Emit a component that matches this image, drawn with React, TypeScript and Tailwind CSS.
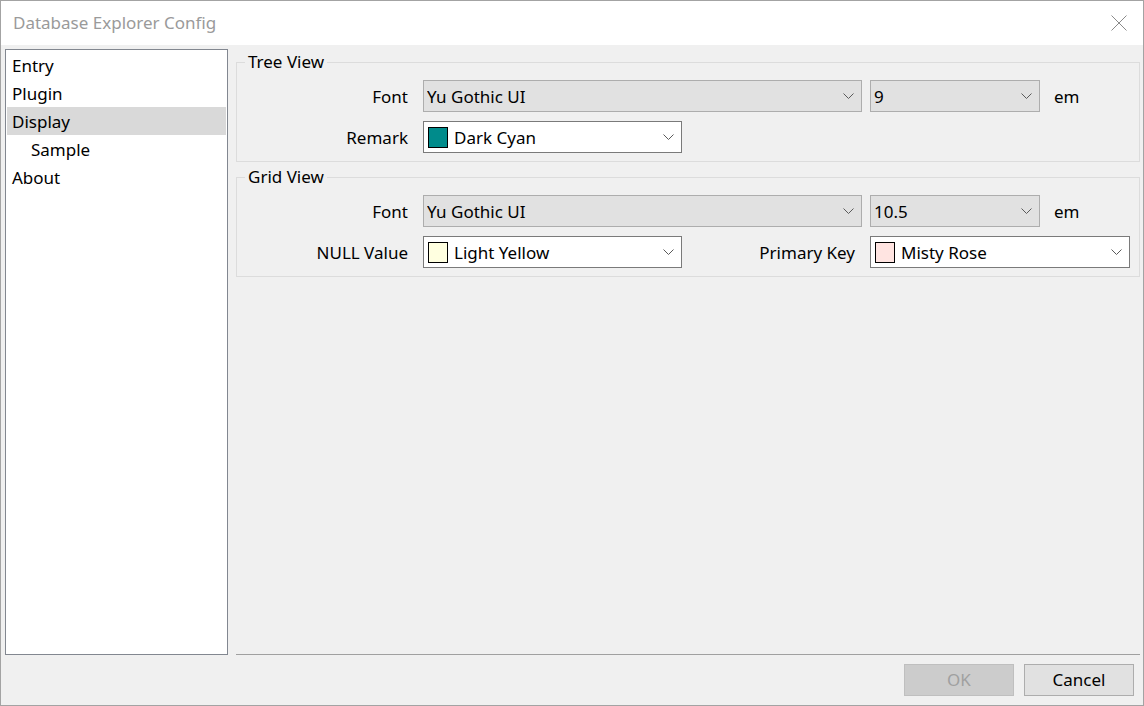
import React from "react";

const Chevron = () => (
  <svg width="11" height="7" viewBox="0 0 11 7" className="shrink-0">
    <polyline points="0.5,0.5 5.5,5.5 10.5,0.5" fill="none" stroke="#5a5a5a" strokeWidth="1" />
  </svg>
);

function GrayCombo({ value, w }: { value: string; w: string }) {
  return (
    <div className={`${w} h-[32px] bg-[#e1e1e1] border border-[#adadad] flex items-center pl-[3px] pr-[7px]`}>
      <span className="flex-1 truncate pt-[2px]">{value}</span>
      <Chevron />
    </div>
  );
}

function ColorCombo({ value, color, w }: { value: string; color: string; w: string }) {
  return (
    <div className={`${w} h-[32px] bg-white border border-[#7a7a7a] flex items-center pl-[4px] pr-[7px]`}>
      <span className="w-[20px] h-[21px] border border-black shrink-0" style={{ backgroundColor: color }} />
      <span className="flex-1 ml-[6px] truncate pt-[2px]">{value}</span>
      <Chevron />
    </div>
  );
}

function Label({ text, w = "w-[186px]" }: { text: string; w?: string }) {
  return <div className={`${w} shrink-0 text-right pr-[15px] pt-[2px]`}>{text}</div>;
}

function Group({ title, children, className = "" }: { title: string; children: React.ReactNode; className?: string }) {
  return (
    <fieldset className={`border border-[#dcdcdc] pt-[8px] pb-[8px] ${className}`}>
      <legend className="ml-[8px] px-[3px] leading-[20px]">{title}</legend>
      {children}
    </fieldset>
  );
}

export default function App() {
  return (
    <div
      className="w-[1144px] h-[706px] border border-[#a3a3a3] flex flex-col bg-[#f0f0f0] text-[17px] text-black leading-[22px]"
      style={{ fontFamily: '"Noto Sans", "Open Sans", sans-serif' }}
    >
      <div className="h-[44px] bg-white flex items-center pl-[12px] pr-[16px] text-[#9a9a9a] shrink-0">
        <span className="flex-1">Database Explorer Config</span>
        <svg width="16" height="16" viewBox="0 0 16 16">
          <line x1="0.5" y1="0.5" x2="15.5" y2="15.5" stroke="#8a8a8a" strokeWidth="1" />
          <line x1="15.5" y1="0.5" x2="0.5" y2="15.5" stroke="#8a8a8a" strokeWidth="1" />
        </svg>
      </div>
      <div className="flex-1 flex flex-col pt-[4px] pl-[4px] pr-[3px]">
        <div className="flex flex-1 gap-[8px]">
          <div className="w-[223px] bg-white border border-[#828790] p-[1px] flex flex-col">
            {[
              { t: "Entry", i: false, s: false },
              { t: "Plugin", i: false, s: false },
              { t: "Display", i: false, s: true },
              { t: "Sample", i: true, s: false },
              { t: "About", i: false, s: false },
            ].map((it) => (
              <div
                key={it.t}
                className={`h-[28px] flex items-center pt-[1px] ${it.i ? "pl-[24px]" : "pl-[5px]"} ${it.s ? "bg-[#d9d9d9]" : ""}`}
              >
                {it.t}
              </div>
            ))}
          </div>
          <div className="flex-1 flex flex-col pt-[3px] border-b border-[#a0a0a0]">
            <Group title="Tree View">
              <div className="flex items-center">
                <Label text="Font" />
                <GrayCombo value="Yu Gothic UI" w="w-[439px]" />
                <div className="ml-[8px]">
                  <GrayCombo value="9" w="w-[170px]" />
                </div>
                <span className="ml-[14px] pt-[2px]">em</span>
              </div>
              <div className="flex items-center mt-[9px]">
                <Label text="Remark" />
                <ColorCombo value="Dark Cyan" color="#008b8b" w="w-[259px]" />
              </div>
            </Group>
            <Group title="Grid View" className="mt-[5px]">
              <div className="flex items-center">
                <Label text="Font" />
                <GrayCombo value="Yu Gothic UI" w="w-[439px]" />
                <div className="ml-[8px]">
                  <GrayCombo value="10.5" w="w-[170px]" />
                </div>
                <span className="ml-[14px] pt-[2px]">em</span>
              </div>
              <div className="flex items-center mt-[9px]">
                <Label text="NULL Value" />
                <ColorCombo value="Light Yellow" color="#ffffe0" w="w-[259px]" />
                <Label text="Primary Key" w="w-[188px]" />
                <ColorCombo value="Misty Rose" color="#ffe4e1" w="w-[260px]" />
              </div>
            </Group>
          </div>
        </div>
        <div className="flex justify-end gap-[10px] pt-[9px] pb-[9px] pr-[6px]">
          <button className="w-[110px] h-[32px] bg-[#cccccc] border border-[#bfbfbf] text-[#a0a0a0]">OK</button>
          <button className="w-[110px] h-[32px] bg-[#e1e1e1] border border-[#adadad]">Cancel</button>
        </div>
      </div>
    </div>
  );
}
